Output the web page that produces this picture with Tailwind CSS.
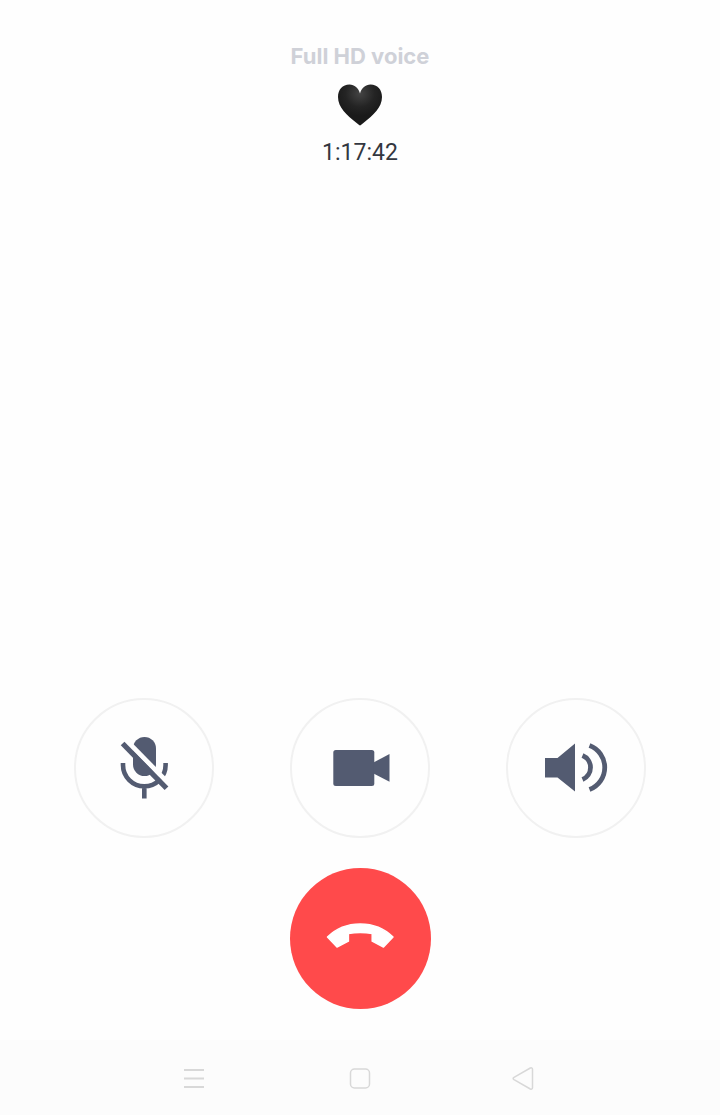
<!DOCTYPE html>
<html lang="en">
<head>
    <meta charset="UTF-8">
    <meta name="viewport" content="width=device-width, initial-scale=1.0">
    <title>Voice call</title>
    <script src="https://cdn.jsdelivr.net/npm/@tailwindcss/browser@4"></script>
</head>
<body class="min-h-screen flex flex-col bg-[#fefefe] font-['Roboto',sans-serif]">
    <!-- Call info -->
    <header class="flex flex-col items-center pt-10">
        <p class="font-['Inter',sans-serif] font-bold text-[22px] leading-8 text-[#cfd1d8]">Full HD voice</p>
        <h1 class="mt-3" aria-label="Black heart">
            <svg class="w-11 h-[42px]" viewBox="0 0 44 42" aria-hidden="true">
                <defs>
                    <radialGradient id="shine" cx="50%" cy="22%" r="55%">
                        <stop offset="0" stop-color="#444"/>
                        <stop offset="0.6" stop-color="#242424"/>
                        <stop offset="1" stop-color="#1a1a1a"/>
                    </radialGradient>
                </defs>
                <path fill="url(#shine)" d="M22 9.5C20.5 4 16.5 0.5 11.5 0.5C4.5 0.5 0 5.5 0 13C0 23.5 9 31.5 18 38.5Q21 41 22 41.5Q23 41 26 38.5C35 31.5 44 23.5 44 13C44 5.5 39.5 0.5 32.5 0.5C27.5 0.5 23.5 4 22 9.5Z"/>
            </svg>
        </h1>
        <time class="mt-2 text-[23px] leading-[38px] text-[#333740]">1:17:42</time>
    </header>

    <!-- Call controls -->
    <main class="mt-auto pb-[31px]">
        <div class="flex justify-between px-[74px]">
            <button type="button" aria-label="Mute" class="size-[140px] flex items-center justify-center rounded-full border-2 border-[#f1f1f1] text-[#535b71]">
                <svg class="size-20" viewBox="0 0 80 80" fill="none" stroke="currentColor" stroke-width="4.6">
                    <rect x="29" y="9" width="23" height="39" rx="11.5" fill="currentColor" stroke="none"/>
                    <path d="M19 35v2a21.3 21.3 0 0 0 42.6 0v-2M40.3 58v12.5"/>
                    <path stroke="#fefefe" stroke-width="5" d="M22.6 12.7L66 57"/>
                    <path stroke-width="5.2" d="M18.6 15.5L62.5 60.3"/>
                </svg>
            </button>
            <button type="button" aria-label="Video" class="size-[140px] flex items-center justify-center rounded-full border-2 border-[#f1f1f1] text-[#535b71]">
                <svg class="size-20" viewBox="0 0 80 80" fill="currentColor">
                    <rect x="13.3" y="22" width="41" height="36" rx="2.5"/>
                    <path d="M53.5 34.5L69.5 26v27.7L53.5 45.5z"/>
                </svg>
            </button>
            <button type="button" aria-label="Speaker" class="size-[140px] flex items-center justify-center rounded-full border-2 border-[#f1f1f1] text-[#535b71]">
                <svg class="size-20" viewBox="0 0 80 80" fill="none" stroke="currentColor" stroke-width="4.8">
                    <path fill="currentColor" stroke="none" d="M9 30H21.5L39 15.5v48L21.5 49.5H9z"/>
                    <path d="M46.5 27.5A13 13 0 0 1 46.5 51.5M53.5 17.5A23.5 23.5 0 0 1 53.5 61.5"/>
                </svg>
            </button>
        </div>
        <div class="mt-[30px] flex justify-center">
            <button type="button" aria-label="End call" class="size-[141px] flex items-center justify-center rounded-full bg-[#ff4a4b] text-white">
                <svg class="size-20" viewBox="0 0 80 80" fill="currentColor" stroke="currentColor" stroke-width="1.5" stroke-linejoin="round">
                    <path d="M7.5 38C25 20.5 55.500 20.5 73 38L63.5 48L52.2 42.2V34.5Q40.3 32.3 28.4 34.5V42.2L17 48z"/>
                </svg>
            </button>
        </div>
    </main>

    <!-- System navigation -->
    <nav class="h-[75px] flex items-center justify-between px-[25%] bg-[#fcfcfc] text-[#d8d8d8]">
        <button type="button" aria-label="Menu">
            <svg class="size-7" viewBox="0 0 28 28" fill="none" stroke="currentColor" stroke-width="2">
                <path d="M4 6h20M4 14.5h20M4 23h20"/>
            </svg>
        </button>
        <button type="button" aria-label="Home">
            <svg class="size-7" viewBox="0 0 28 28" fill="none" stroke="currentColor" stroke-width="1.5">
                <rect x="4.5" y="5" width="19" height="19" rx="4"/>
            </svg>
        </button>
        <button type="button" aria-label="Back">
            <svg class="size-7" viewBox="0 0 28 28" fill="none" stroke="currentColor" stroke-width="1.5" stroke-linejoin="round">
                <path d="M2 13.4L18.3 4Q20.5 3.3 20.5 5.5V23.5Q20.5 25.7 18.3 25L2 15.6Q0.3 14.5 2 13.4z"/>
            </svg>
        </button>
    </nav>
</body>
</html>
